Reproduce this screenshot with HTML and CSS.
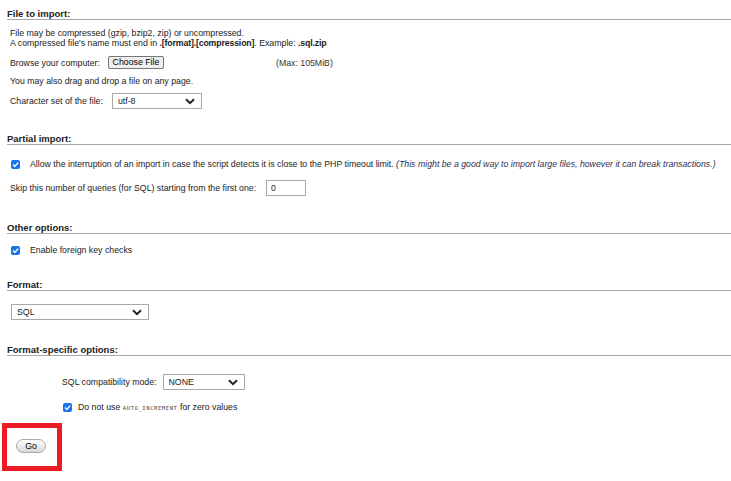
FILE: index.html
```html
<!DOCTYPE html>
<html>
<head>
<meta charset="utf-8">
<link rel="stylesheet" href="styles.css">
</head>
<body>
<div class="page">
  <section class="sec sec-file">
    <h2 class="head">File to import:</h2>
    <div class="body">
      <p class="txt">File may be compressed (gzip, bzip2, zip) or uncompressed.<br>A compressed file's name must end in <b>.[format].[compression]</b>. Example: <b>.sql.zip</b></p>
      <div class="row row-browse">
        <span class="lbl">Browse your computer:</span>
        <button class="filebtn">Choose File</button>
        <span class="max">(Max: 105MiB)</span>
      </div>
      <p class="txt row-drag">You may also drag and drop a file on any page.</p>
      <div class="row row-charset">
        <span class="lbl">Character set of the file:</span>
        <span class="sel sel-charset"><select><option>utf-8</option></select><svg class="chev" viewBox="0 0 10 7" width="10" height="7"><path d="M1 1.2 L5 5.2 L9 1.2" fill="none" stroke="#222" stroke-width="2"/></svg></span>
      </div>
    </div>
  </section>

  <section class="sec sec-partial">
    <h2 class="head">Partial import:</h2>
    <div class="body">
      <div class="row row-check1">
        <span class="cb"><svg viewBox="0 0 9 9" width="9" height="9"><path d="M2 4.6 L3.8 6.4 L7.2 2.6" fill="none" stroke="#fff" stroke-width="1.4"/></svg></span>
        <span class="lbl">Allow the interruption of an import in case the script detects it is close to the PHP timeout limit. <i class="note">(This might be a good way to import large files, however it can break transactions.)</i></span>
      </div>
      <div class="row row-skip">
        <span class="lbl">Skip this number of queries (for SQL) starting from the first one:</span>
        <input class="num" type="text" value="0">
      </div>
    </div>
  </section>

  <section class="sec sec-other">
    <h2 class="head">Other options:</h2>
    <div class="body">
      <div class="row row-check2">
        <span class="cb"><svg viewBox="0 0 9 9" width="9" height="9"><path d="M2 4.6 L3.8 6.4 L7.2 2.6" fill="none" stroke="#fff" stroke-width="1.4"/></svg></span>
        <span class="lbl">Enable foreign key checks</span>
      </div>
    </div>
  </section>

  <section class="sec sec-format">
    <h2 class="head">Format:</h2>
    <div class="body">
      <div class="row row-format">
        <span class="sel sel-format"><select><option>SQL</option></select><svg class="chev" viewBox="0 0 10 7" width="10" height="7"><path d="M1 1.2 L5 5.2 L9 1.2" fill="none" stroke="#222" stroke-width="2"/></svg></span>
      </div>
    </div>
  </section>

  <section class="sec sec-specific">
    <h2 class="head">Format-specific options:</h2>
    <div class="body indent">
      <div class="row row-compat">
        <span class="lbl">SQL compatibility mode:</span>
        <span class="sel sel-compat"><select><option>NONE</option></select><svg class="chev" viewBox="0 0 10 7" width="10" height="7"><path d="M1 1.2 L5 5.2 L9 1.2" fill="none" stroke="#222" stroke-width="2"/></svg></span>
      </div>
      <div class="row row-check3">
        <span class="cb"><svg viewBox="0 0 9 9" width="9" height="9"><path d="M2 4.6 L3.8 6.4 L7.2 2.6" fill="none" stroke="#fff" stroke-width="1.4"/></svg></span>
        <span class="lbl">Do not use <code class="mono">AUTO_INCREMENT</code> for zero values</span>
      </div>
    </div>
  </section>

  <div class="gobox">
    <button class="go">Go</button>
  </div>
</div>
</body>
</html>
```

FILE: styles.css
```css
* { box-sizing: border-box; }
html, body { margin: 0; padding: 0; background: #fff; }
body {
  font-family: "Liberation Sans", Arial, sans-serif;
  font-size: 8.75px;
  color: #222;
}
.page {
  display: flex;
  flex-direction: column;
  padding: 8px 0 0 7px;
}
.head {
  margin: 0;
  font-size: 9.5px;
  line-height: 11px;
  font-weight: bold;
  color: #222;
  border-bottom: 1px solid #a8a8a8;
}
.body {
  display: flex;
  flex-direction: column;
  padding-left: 3px;
}
.txt { margin: 0; line-height: 10px; }
.txt b { letter-spacing: -0.15px; }
.row { display: flex; align-items: center; }
.lbl { line-height: 10px; white-space: nowrap; }

.sec-file .body { margin-top: 8px; }
.row-browse { margin-top: 8px; height: 13px; }
.filebtn {
  margin: 0 0 0 8px;
  height: 13px;
  width: 56px;
  padding: 0;
  font-family: inherit;
  font-size: 8.75px;
  line-height: 11px;
  color: #000;
  background: #efefef;
  border: 1px solid #767676;
  border-radius: 2px;
}
.max { margin-left: 112px; color: #333; }
.row-drag { margin-top: 7px; }
.row-charset { margin-top: 7px; }

.sel { position: relative; display: inline-block; }
.sel select {
  appearance: none;
  -webkit-appearance: none;
  display: block;
  height: 16px;
  margin: 0;
  padding: 0 0 0 5px;
  font-family: inherit;
  font-size: 8.75px;
  color: #222;
  background: #fff;
  border: 1px solid #a9a9a9;
  border-radius: 0;
}
.sel .chev { position: absolute; top: 5px; right: 7px; pointer-events: none; }
.sel-charset { margin-left: 9px; }
.sel-charset select { width: 90px; }

.sec-partial { margin-top: 24px; }
.sec-partial .body { margin-top: 14px; }
.cb {
  display: inline-flex;
  width: 9px;
  height: 9px;
  border-radius: 2px;
  background: #1a73e8;
  flex: none;
  margin-left: 1px;
}
.cb svg { display: block; }
.row-check1 .lbl, .row-check2 .lbl { margin-left: 10px; }
.note { color: #2f2f52; }
.row-skip { margin-top: 11px; }
.num {
  margin: 0 0 0 10px;
  width: 40px;
  height: 16px;
  padding: 0 0 0 4px;
  font-family: inherit;
  font-size: 8.75px;
  color: #222;
  border: 1px solid #a9a9a9;
  border-radius: 0;
}

.sec-other { margin-top: 26px; }
.sec-other .body { margin-top: 11px; }

.sec-format { margin-top: 24px; }
.sec-format .body { margin-top: 13px; padding-left: 4px; }
.sel-format select { width: 138px; }

.sec-specific { margin-top: 24px; }
.indent { padding-left: 55px; margin-top: 18px; }
.sel-compat { margin-left: 6px; }
.sel-compat select { width: 82px; }
.row-check3 { margin-top: 12px; }
.row-check3 .lbl { margin-left: 6px; }
.mono {
  font-family: "DejaVu Sans Mono", monospace;
  font-size: 5.5px;
  letter-spacing: 0.6px;
  color: #444;
}

.gobox {
  align-self: flex-start;
  margin: 10px 0 0 -5px;
  width: 60px;
  height: 48px;
  border: 5px solid #ed1c24;
  display: flex;
  align-items: flex-start;
  padding: 11px 0 0 9px;
}
.go {
  width: 30px;
  height: 14px;
  margin: 0;
  padding: 0;
  font-family: inherit;
  font-size: 8.75px;
  color: #000;
  background: linear-gradient(#ffffff, #d8d8d8);
  border: 1px solid #aaa;
  border-radius: 7px;
}
```
